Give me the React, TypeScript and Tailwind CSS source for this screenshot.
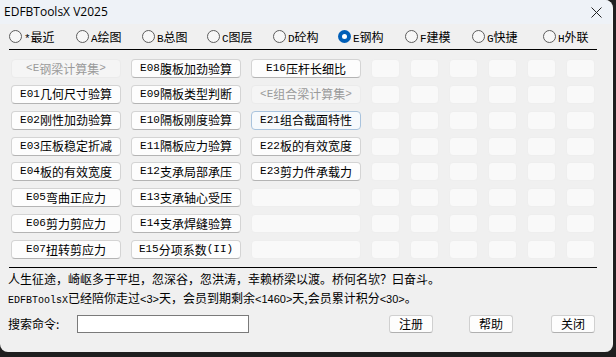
import React from "react";

const radios: { label: string; w: string; sel?: boolean }[] = [
  { label: "*最近", w: "w-[67px]" },
  { label: "A绘图", w: "w-[66px]" },
  { label: "B总图", w: "w-[65px]" },
  { label: "C图层", w: "w-[66px]" },
  { label: "D砼构", w: "w-[65px]" },
  { label: "E钢构", w: "w-[67px]", sel: true },
  { label: "F建模", w: "w-[67px]" },
  { label: "G快捷", w: "w-[71px]" },
  { label: "H外联", w: "w-[60px]" },
];

type Cell = { t?: string; kind: "btn" | "dis" | "empty" | "focus" };

const col1: Cell[] = [
  { t: "<E钢梁计算集>", kind: "dis" },
  { t: "E01几何尺寸验算", kind: "btn" },
  { t: "E02刚性加劲验算", kind: "btn" },
  { t: "E03压板稳定折减", kind: "btn" },
  { t: "E04板的有效宽度", kind: "btn" },
  { t: "E05弯曲正应力", kind: "btn" },
  { t: "E06剪力剪应力", kind: "btn" },
  { t: "E07扭转剪应力", kind: "btn" },
];
const col2: Cell[] = [
  { t: "E08腹板加劲验算", kind: "btn" },
  { t: "E09隔板类型判断", kind: "btn" },
  { t: "E10隔板刚度验算", kind: "btn" },
  { t: "E11隔板应力验算", kind: "btn" },
  { t: "E12支承局部承压", kind: "btn" },
  { t: "E13支承轴心受压", kind: "btn" },
  { t: "E14支承焊缝验算", kind: "btn" },
  { t: "E15分项系数(II)", kind: "btn" },
];
const col3: Cell[] = [
  { t: "E16压杆长细比", kind: "btn" },
  { t: "<E组合梁计算集>", kind: "dis" },
  { t: "E21组合截面特性", kind: "focus" },
  { t: "E22板的有效宽度", kind: "btn" },
  { t: "E23剪力件承载力", kind: "btn" },
  { kind: "empty" },
  { kind: "empty" },
  { kind: "empty" },
];

function Mixed({ text }: { text: string }) {
  const runs: { s: string; ascii: boolean }[] = [];
  for (const ch of text) {
    const a = ch.charCodeAt(0) < 128;
    const last = runs[runs.length - 1];
    if (last && last.ascii === a) last.s += ch;
    else runs.push({ s: ch, ascii: a });
  }
  return (
    <>
      {runs.map((r, i) =>
        r.ascii ? (
          <span key={i} className="font-['Liberation_Mono',monospace] text-[11px]">
            {r.s}
          </span>
        ) : (
          <span key={i} className="font-['Noto_Sans_CJK_SC',sans-serif] text-[12px]">
            {r.s}
          </span>
        )
      )}
    </>
  );
}

function CellView({ c }: { c: Cell }) {
  const base =
    "h-[19px] rounded-[4px] flex items-center justify-center leading-none whitespace-nowrap";
  if (c.kind === "btn")
    return (
      <div className={base + " bg-[#fdfdfd] border border-[#d4d4d4] border-b-[#b4b4b4] text-black"}>
        <Mixed text={c.t!} />
      </div>
    );
  if (c.kind === "focus")
    return (
      <div className={base + " bg-[#f6f9fc] border border-[#a9c3dd] text-black"}>
        <Mixed text={c.t!} />
      </div>
    );
  if (c.kind === "dis")
    return (
      <div className={base + " bg-[#f5f5f5] border border-[#ebebeb] text-[#9a9a9a]"}>
        <Mixed text={c.t!} />
      </div>
    );
  return <div className="h-[19px] rounded-[4px] bg-[#f9f9f9] border border-[#eeeeee]" />;
}

export default function App() {
  const rows = Array.from({ length: 8 }, (_, i) => i);
  const btn =
    "w-[44px] h-[18px] bg-[#fdfdfd] border border-[#d0d0d0] border-b-[#b0b0b0] rounded-[3px] text-[12px] leading-none text-black font-['Noto_Sans_CJK_SC',sans-serif]";
  return (
    <div className="w-[616px] h-[357px] bg-[#1f1f1f] overflow-hidden">
      <div className="w-[613px] h-[352px] bg-[#f0f0f0] rounded-tr-[8px] rounded-b-[8px] overflow-hidden flex flex-col border-r border-[#f7f7f7]">
        {/* title bar */}
        <div className="h-[24px] bg-[#eef2f7] flex items-center justify-between pl-[4px] pr-[10px] shrink-0">
          <span className="text-[12px] text-black font-['Open_Sans',sans-serif] leading-none">
            EDFBToolsX V2025
          </span>
          <svg width="11" height="11" viewBox="0 0 11 11" className="mt-[1px]">
            <path d="M0.5 0.5 L10.5 10.5 M10.5 0.5 L0.5 10.5" stroke="#222" strokeWidth="1" />
          </svg>
        </div>
        {/* radios */}
        <div className="h-[24px] flex items-center pl-[9px] shrink-0">
          {radios.map((r) => (
            <div key={r.label} className={r.w + " flex items-center gap-[2px] shrink-0"}>
              {r.sel ? (
                <span className="w-[13px] h-[13px] rounded-full bg-[#005fb8] flex items-center justify-center">
                  <span className="w-[5px] h-[5px] rounded-full bg-white" />
                </span>
              ) : (
                <span className="w-[13px] h-[13px] rounded-full border border-[#5d5d5d] bg-[#f7f7f7]" />
              )}
              <span className="text-black leading-none whitespace-nowrap">
                <Mixed text={r.label} />
              </span>
            </div>
          ))}
        </div>
        <div className="ml-[9px] w-[588px] h-px bg-black mt-[1px] shrink-0" />
        {/* grid */}
        <div className="ml-[11px] mt-[9px] grid grid-cols-[110px_110px_110px_29px_29px_29px_29px_29px_29px] auto-rows-[19px] gap-x-[10px] gap-y-[6.86px] shrink-0">
          {rows.map((i) => (
            <React.Fragment key={i}>
              <CellView c={col1[i]} />
              <CellView c={col2[i]} />
              <CellView c={col3[i]} />
              {[0, 1, 2, 3, 4, 5].map((j) => (
                <CellView key={j} c={{ kind: "empty" }} />
              ))}
            </React.Fragment>
          ))}
        </div>
        <div className="ml-[9px] w-[588px] h-px bg-black mt-[8px] shrink-0" />
        {/* info text */}
        <div className="pl-[8px] mt-[1px] text-[12px] leading-[19px] text-black shrink-0">
          <div className="font-['Noto_Sans_CJK_SC',sans-serif] whitespace-nowrap">
            人生征途，崎岖多于平坦，忽深谷，忽洪涛，幸赖桥梁以渡。桥何名欤？曰奋斗。
          </div>
          <div className="whitespace-nowrap font-['Noto_Sans_CJK_SC',sans-serif]">
            <span className="font-['Liberation_Mono',monospace] text-[10px]">EDFBToolsX</span>
            已经陪你走过
            <span className="text-[11px] font-['Liberation_Sans',sans-serif]">&lt;3&gt;</span>
            天，会员到期剩余
            <span className="text-[11px] font-['Liberation_Sans',sans-serif]">&lt;1460&gt;</span>
            天,会员累计积分
            <span className="text-[11px] font-['Liberation_Sans',sans-serif]">&lt;30&gt;</span>。
          </div>
        </div>
        {/* search row */}
        <div className="mt-[5px] h-[18px] flex items-center shrink-0">
          <span className="ml-[8px] w-[69px] text-[12px] text-black font-['Noto_Sans_CJK_SC',sans-serif] leading-none">
            搜索命令:
          </span>
          <div className="w-[172px] h-[18px] bg-white border border-[#7a7a7a]" />
          <button className={"ml-[140px] " + btn}>注册</button>
          <button className={"ml-[36px] " + btn}>帮助</button>
          <button className={"ml-[38px] " + btn}>关闭</button>
        </div>
      </div>
    </div>
  );
}
